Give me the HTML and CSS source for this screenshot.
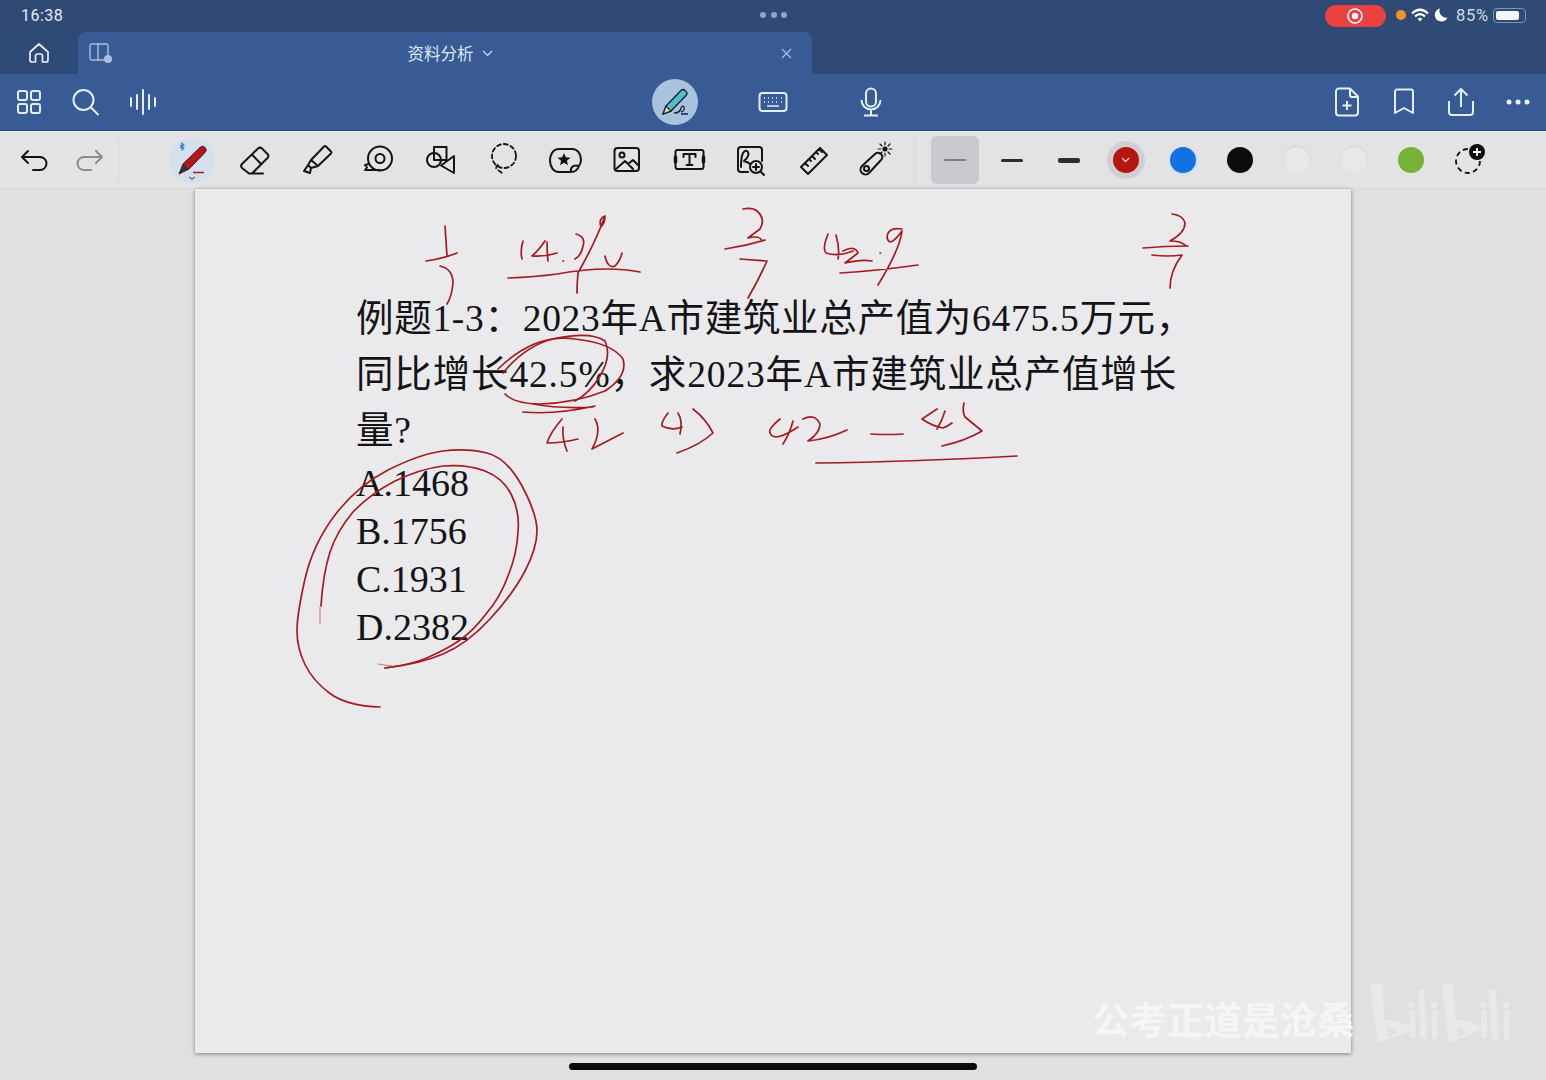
FILE: index.html
```html
<!DOCTYPE html>
<html lang="zh-CN">
<head>
<meta charset="utf-8">
<title>资料分析</title>
<link rel="stylesheet" href="styles.css">
</head>
<body>
<div class="app">
  <header class="chrome">
    <div class="status">
      <span class="time">16:38</span>
      <span class="dots"><i></i><i></i><i></i></span>
      <div class="status-right">
        <span class="rec"><svg width="18" height="18" viewBox="0 0 18 18"><circle cx="9" cy="9" r="7" fill="none" stroke="#fff" stroke-width="1.6"/><circle cx="9" cy="9" r="3.2" fill="#fff"/></svg></span>
        <span class="orange"></span>
        <svg class="st-ico" width="20" height="16" viewBox="0 0 20 16"><path d="M2 6.500Q10 -1 18 6.500M5 9.500Q10 4.500 15 9.500" fill="none" stroke="#fff" stroke-width="2.2"/><path d="M7.600 11.800Q10 9.600 12.400 11.800L10 14.400Z" fill="#fff"/></svg>
        <svg class="st-ico" width="16" height="16" viewBox="0 0 16 16"><path d="M7 1.500A6.600 6.600 0 1 0 14.500 10.500 6.600 6.600 0 0 1 7 1.500Z" fill="#fff"/></svg>
        <span class="pct">85%</span>
        <span class="battery"><b></b></span>
      </div>
    </div>
    <div class="tabs">
      <div class="home-tab">
        <svg width="24" height="24" viewBox="0 0 24 24" fill="none" stroke="#e6edf7" stroke-width="1.7" stroke-linejoin="round"><path d="M3 11 12 3l9 8v8a2 2 0 0 1-2 2h-3.500v-6a2 2 0 0 0-2-2h-3a2 2 0 0 0-2 2v6H5a2 2 0 0 1-2-2z"/></svg>
      </div>
      <div class="doc-tab">
        <svg class="tab-ico" width="24" height="22" viewBox="0 0 24 22" fill="none" stroke="#a9bedc" stroke-width="1.4"><rect x="1" y="2" width="18" height="16" rx="2"/><path d="M9 2v16"/><circle cx="19" cy="17" r="4" fill="#a9bedc" stroke="none"/></svg>
        <div class="doc-title"><span>资料分析</span><svg width="11" height="7" viewBox="0 0 11 7" fill="none" stroke="#d5e0f0" stroke-width="1.2"><path d="M1 1l4.500 4.500L10 1"/></svg></div>
        <svg class="tab-close" width="11" height="11" viewBox="0 0 11 11" stroke="#a9bedc" stroke-width="1.3"><path d="M1 1l9 9M10 1l-9 9"/></svg>
      </div>
    </div>
    <div class="bar">
      <div class="bar-left">
        <span class="bar-cell"><svg width="26" height="26" viewBox="0 0 26 26" fill="none" stroke="#e6edf7" stroke-width="2"><rect x="2" y="2" width="9" height="9" rx="2"/><rect x="15" y="2" width="9" height="9" rx="2"/><rect x="2" y="15" width="9" height="9" rx="2"/><rect x="15" y="15" width="9" height="9" rx="2"/></svg></span>
        <span class="bar-cell"><svg width="28" height="28" viewBox="0 0 28 28" fill="none" stroke="#e6edf7" stroke-width="2"><circle cx="11.500" cy="12" r="10"/><path d="M19 19.500 26.500 27"/></svg></span>
        <span class="bar-cell"><svg width="28" height="28" viewBox="0 0 28 28" fill="none" stroke="#e6edf7" stroke-width="2" stroke-linecap="round"><path d="M2 10v8M8 7v14M14 2v24M20 7v14M26 10v8"/></svg></span>
      </div>
      <div class="bar-center">
        <span class="center-cell"><span class="pen-btn"><svg width="30" height="30" viewBox="0 0 30 30"><path d="M3 27 6 19 21 3.500a2.500 2.500 0 0 1 4 0l1 1a2.500 2.500 0 0 1 0 4L11 24Z" fill="#55bccb" stroke="#17222e" stroke-width="1.400" stroke-linejoin="round"/><path d="M3 27 6 19 11 24Z" fill="#e7d3a4" stroke="#17222e" stroke-width="1.200"/><path d="M14 26Q20 26 21 21 22 18 24 20 25 24 21 25M21 27h7" fill="none" stroke="#17222e" stroke-width="1.300"/></svg></span></span>
        <span class="center-cell"><svg width="30" height="22" viewBox="0 0 30 22" fill="none" stroke="#e6edf7" stroke-width="2"><rect x="1.500" y="2" width="27" height="18" rx="3"/><path d="M6 7h1M10 7h1M14 7h1M18 7h1M23 7h1M6 11h1M10 11h1M14 11h1M18 11h1M23 11h1M9 15h12" stroke-width="1.500"/></svg></span>
        <span class="center-cell"><svg width="24" height="30" viewBox="0 0 24 30" fill="none" stroke="#e6edf7" stroke-width="2"><rect x="7" y="1.500" width="10" height="18" rx="5"/><path d="M2.500 13a9.500 9.500 0 0 0 19 0M12 23v5M5 28.500h14"/></svg></span>
      </div>
      <div class="bar-right">
        <span class="bar-cell"><svg width="26" height="30" viewBox="0 0 26 30" fill="none" stroke="#e6edf7" stroke-width="2" stroke-linejoin="round"><path d="M16 1.500H5a3 3 0 0 0-3 3v21a3 3 0 0 0 3 3h16a3 3 0 0 0 3-3V9.500Zm0 0V8a2 2 0 0 0 2 2h6M13 14v9M8.500 18.500h9"/></svg></span>
        <span class="bar-cell"><svg width="22" height="28" viewBox="0 0 22 28" fill="none" stroke="#e6edf7" stroke-width="2" stroke-linejoin="round"><path d="M2 3.500a2 2 0 0 1 2-2h14a2 2 0 0 1 2 2V25l-9-5-9 5Z"/></svg></span>
        <span class="bar-cell"><svg width="28" height="30" viewBox="0 0 28 30" fill="none" stroke="#e6edf7" stroke-width="2" stroke-linejoin="round"><path d="M14 20V2M7.500 8.500 14 2l6.500 6.500M2 14v11a3 3 0 0 0 3 3h18a3 3 0 0 0 3-3V14"/></svg></span>
        <span class="bar-cell"><svg width="24" height="6" viewBox="0 0 24 6" fill="#eef3fa"><circle cx="3" cy="3" r="2.500"/><circle cx="12" cy="3" r="2.500"/><circle cx="21" cy="3" r="2.500"/></svg></span>
      </div>
    </div>
  </header>

  <nav class="tools">
    <div class="history">
      <span class="hist-cell"><svg class="ico" width="40" height="40" viewBox="0 0 40 40"><path d="M14 11 8 17l6 6M8 17h18a6.500 6.500 0 0 1 0 13h-7"/></svg></span>
      <span class="hist-cell muted"><svg class="ico" width="40" height="40" viewBox="0 0 40 40"><path d="M26 11l6 6-6 6M32 17H14a6.500 6.500 0 0 0 0 13h7"/></svg></span>
    </div>
    <div class="tool-list">
      <span class="tool"><span class="pen-active"><svg width="46" height="46" viewBox="0 0 46 46"><path d="M10 37 14 27 31 10.500a3.500 3.500 0 0 1 5 0 3.500 3.500 0 0 1 0 5L20 32Z" fill="#b5161c" stroke="#4c1114" stroke-width="1"/><path d="M10 37 14 27 20 32Z" fill="#333"/><path d="M24 35.500h11" stroke="#b5161c" stroke-width="1.500"/><path d="M11 8l4 3-2 2V6l2 2-4 3" fill="none" stroke="#2a84d0" stroke-width="1.100"/><path d="M20 40l3 2 3-2" fill="none" stroke="#2a6fb0" stroke-width="1.100"/></svg></span></span>
      <span class="tool"><svg class="ico" width="40" height="40" viewBox="0 0 40 40"><path d="M8 24 24 8.500a3 3 0 0 1 4 0l5.500 5.500a3 3 0 0 1 0 4L18 33.500h-3L8 28a3 3 0 0 1 0-4ZM18 14.500 27 24M15 33.500h14"/></svg></span>
      <span class="tool"><svg class="ico" width="40" height="40" viewBox="0 0 40 40"><path d="M15 20 28 6.500a1.500 1.500 0 0 1 2 0l5 5a1.500 1.500 0 0 1 0 2L22 26ZM15 20l-3 5 3 3 7-2M12 25l-4 6 6 2 1-5"/></svg></span>
      <span class="tool"><svg class="ico" width="40" height="40" viewBox="0 0 40 40"><circle cx="22" cy="18.500" r="12"/><circle cx="22" cy="18.500" r="4.500"/><path d="M11 24 7 25l2 2.500-2 2.500h15"/></svg></span>
      <span class="tool"><svg class="ico" width="40" height="40" viewBox="0 0 40 40"><rect x="14" y="7" width="12.500" height="13"/><circle cx="14" cy="20" r="7"/><path d="M34 16v17l-13-7.500Z"/></svg></span>
      <span class="tool"><svg class="ico dashed" width="40" height="40" viewBox="-1 0 40 40"><circle cx="21" cy="16" r="12"/><path d="M15 25q-4 3 0 5l4 3"/></svg></span>
      <span class="tool"><svg class="ico" width="40" height="40" viewBox="-1 0 40 40"><path d="M26 32H14C8 32 5 26 5 20.500S8 9 14 9h13c6 0 9 5.500 9 11 0 2-1 4.500-2 6M26 32c-1-4 2-8 8-6-1 3-4 6-8 6Z"/><path d="M19 13l1.800 4.300 4.700.4-3.600 3 1.100 4.500-4-2.400-4 2.400 1.100-4.500-3.600-3 4.700-.4Z" fill="#111" stroke="none"/></svg></span>
      <span class="tool"><svg class="ico" width="40" height="40" viewBox="-1 0 40 40"><rect x="7.500" y="8" width="24.500" height="23" rx="3"/><circle cx="15" cy="15" r="2.500"/><path d="M9 29l9-8 8 8M21 24l5-4 6 6"/></svg></span>
      <span class="tool"><svg class="ico" width="40" height="40" viewBox="-1.500 0 40 40"><rect x="6" y="10" width="28" height="19" rx="2"/><path d="M14 14h12v3M14 14v3M20 14v11M17 25h6"/><path d="M6 17v5M34 17v5" stroke-width="3.500"/></svg></span>
      <span class="tool"><svg class="ico" width="40" height="40" viewBox="0 0 40 40"><path d="M18 32h-7a3 3 0 0 1-3-3V10a3 3 0 0 1 3-3h18a3 3 0 0 1 3 3v11M11 27q0-10 2-14 3-4 5-1 2 4-4 9 4 1 6 3"/><circle cx="26" cy="27" r="6"/><path d="M31 32l3 3M26 24v6M23 27h6"/></svg></span>
      <span class="tool"><svg class="ico" width="40" height="40" viewBox="-2 0 40 40"><path d="M7 27 26 8l7 7L14 34ZM11 23l3 3M15 19l2 2M18 16l3 3M22 12l2 2M25 9l3 3"/></svg></span>
      <span class="tool"><svg class="ico" width="40" height="40" viewBox="0 0 40 40"><path d="M8 26 21 14a4 4 0 0 1 6 0 4 4 0 0 1 0 6L15 33a4.500 4.500 0 0 1-7-7Z"/><circle cx="12.500" cy="28.500" r="2.500"/><circle cx="31" cy="9" r="2.500" fill="#111" stroke="none"/><path class="thin" d="M31 2v3M31 13v3M24 9h3M35 9h3M26 4l2 2M34 12l2 2M36 4l-2 2M28 12l-2 2"/></svg></span>
    </div>
    <div class="pen-opts">
      <span class="opt selected"><i class="line thin-line"></i></span>
      <span class="opt"><i class="line mid-line"></i></span>
      <span class="opt"><i class="line bold-line"></i></span>
      <span class="opt"><span class="swatch red"><svg width="9" height="6" viewBox="0 0 9 6" fill="none" stroke="#f4d4d4" stroke-width="1.300"><path d="M1 1l3.500 3.500L8 1"/></svg></span></span>
      <span class="opt"><span class="swatch blue"></span></span>
      <span class="opt"><span class="swatch black"></span></span>
      <span class="opt"><span class="swatch white"></span></span>
      <span class="opt"><span class="swatch white"></span></span>
      <span class="opt"><span class="swatch green"></span></span>
      <span class="opt"><svg width="36" height="36" viewBox="0 0 36 36"><circle cx="18" cy="19" r="12" fill="none" stroke="#111" stroke-width="1.800" stroke-dasharray="5 3.500"/><circle cx="27" cy="10" r="8" fill="#0c0c0c"/><path d="M27 6v8M23 10h8" stroke="#fff" stroke-width="1.800"/></svg></span>
    </div>
  </nav>

  <main class="stage">
    <article class="paper">
      <div class="problem">
        <p>例题1-3：2023年A市建筑业总产值为6475.5万元，</p>
        <p class="wide">同比增长42.5%，求2023年A市建筑业总产值增长</p>
        <p>量?</p>
      </div>
      <ul class="options">
        <li>A.1468</li>
        <li>B.1756</li>
        <li>C.1931</li>
        <li>D.2382</li>
      </ul>
      <svg class="ink" width="1156" height="865" viewBox="195 188 1156 865">
        <path d="M445 225Q446 240 447 255M426 260Q442 258 457 252M440 265Q453 268 453 282 452 295 447 303"/>
        <path d="M523 240Q520 250 522 258M545 240Q538 250 532 255 545 256 557 252M547 241Q547 250 548 260M563 260h.6M576 233Q586 236 583 245 581 255 575 258"/>
        <path d="M605 215Q598 218 601 226 605 222 605 215 596 240 578 272 577 282 577 292M605 255Q608 268 615 265 620 260 622 252M508 277Q535 276 557 273 585 268 607 268 625 268 640 271"/>
        <path d="M743 208Q752 206 757 210 766 218 760 228L748 237Q760 234 762 240M725 248Q745 245 765 239M740 258 767 260Q758 280 748 297"/>
        <path d="M503 372Q525 345 553 338 590 330 605 340 612 355 600 375 590 392 575 400"/>
        <path d="M498 368Q535 332 575 338 612 342 623 358 628 375 605 390 575 402 540 403 515 403 505 393"/>
        <path d="M523 411Q555 414 595 405M533 403Q560 408 593 406"/>
        <path d="M562 418Q550 432 547 442 562 442 578 438M563 426Q562 438 567 450M595 418Q602 430 592 448L623 432"/>
        <path d="M668 412Q661 421 662 425 672 430 682 426M678 412Q683 420 680 433M693 408Q706 418 713 432 700 444 677 452"/>
        <path d="M828 233Q822 248 826 252 838 256 853 250M836 234Q840 248 838 258M843 250Q855 244 858 252L845 262Q862 258 872 260M880 252h.6M902 228Q888 226 887 236 889 248 902 230 900 248 878 284M840 272Q875 270 918 264"/>
        <path d="M1172 213Q1183 214 1185 222 1185 232 1170 240 1182 240 1186 245M1143 247Q1165 245 1188 245M1152 254Q1168 256 1182 254 1170 270 1170 287"/>
        <path d="M780 418Q768 428 770 432 774 442 798 426M793 420Q790 432 783 443M803 418Q815 412 820 423 820 432 808 440 828 438 847 429"/>
        <path d="M871 433Q887 434 903 433"/>
        <path d="M937 408 922 418Q932 425 943 427 948 425 952 422M945 410Q942 420 937 428M964 402Q962 410 965 416L982 430Q965 440 942 445"/>
        <path d="M816 462Q907 461 1017 455"/>
        <path d="M380 706Q347 705 330 692.500Q313 680 305 663.500Q297 647 297 630Q297 613 305 578Q313 543 335 514Q357 485 388 469Q420 453 443 450Q467 447 487 452Q507 457 522 485Q537 513 537 530Q537 547 525 570Q513 593 490 618Q467 643 443 653Q420 663 385 667"/>
        <path d="M321 605Q323 573 330 551Q337 530 353 511Q370 493 395 480Q420 468 443 465Q467 463 485 470Q503 477 511 493Q520 510 518 531Q517 553 508 575Q500 597 486 613Q473 630 460 639Q447 648 431 655Q415 663 385 667"/>
        <path class="ink-faint" d="M378 663 392 665M320 606V622"/>
      </svg>
    </article>
    <div class="home-indicator"></div>
  </main>

  <div class="watermark">公考正道是沧桑</div>
  <svg class="bili" width="142" height="66" viewBox="1370 980 142 66"><path fill-rule="evenodd" d="M1370 985 1382 983 1385 1020Q1400 1018 1412 1030L1378 1043ZM1387 1027 1388 1037 1398 1032Z"/><path fill-rule="evenodd" d="M1442 985 1453 983 1456 1020Q1472 1018 1482 1030L1449 1043ZM1457 1027 1458 1037 1468 1032Z"/><path d="M1408 1002h6v6h-6ZM1409 1010h6l1 28h-6ZM1418 990l6-1 3 49h-6ZM1431 1002h6v6h-6ZM1432 1010h6v29h-6ZM1480 1002h6v6h-6ZM1481 1010h6v28h-6ZM1489 990l7-1 2 50h-6ZM1503 1002h6v6h-6ZM1504 1010h6v30h-6Z"/></svg>
</div>
</body>
</html>
```

FILE: styles.css
```css
* { box-sizing: border-box; }
html, body { margin: 0; padding: 0; }
body { width: 1546px; height: 1080px; overflow: hidden; background: #e0dfe2; font-family: "Liberation Sans", "Noto Sans CJK SC", sans-serif; }
.app { position: relative; width: 1546px; height: 1080px; display: flex; flex-direction: column; }

.chrome { background: #2f4a75; color: #e6edf7; }
.status { height: 32px; display: grid; grid-template-columns: 1fr auto 1fr; align-items: center; padding: 0 20px 2px 21px; }
.time { font: 16px Roboto, sans-serif; letter-spacing: .5px; color: #e4eaf3; }
.dots { display: flex; gap: 4.500px; }
.dots i { width: 6px; height: 6px; border-radius: 50%; background: #8ba6d2; }
.status-right { display: flex; align-items: center; justify-content: flex-end; }
.rec { width: 61px; height: 22px; border-radius: 11px; background: #e8413f; display: flex; align-items: center; justify-content: center; margin-top: 1px; margin-right: 10px; }
.orange { width: 10px; height: 10px; border-radius: 50%; background: #e9962a; margin-right: 4px; }
.st-ico { margin-right: 3px; }
.pct { font: 16.500px Roboto, sans-serif; color: #cfdaea; letter-spacing: .8px; margin: 0 4px 0 4px; }
.battery { width: 33px; height: 15px; border: 1px solid #7f93b4; border-radius: 4px; padding: 2px; display: flex; }
.battery b { width: 23px; background: #f4f5f7; border-radius: 2px; }

.tabs { height: 42px; display: flex; }
.home-tab { width: 78px; background: #2d4a76; display: flex; align-items: center; justify-content: center; }
.doc-tab { width: 734px; background: #385b95; border-radius: 8px 8px 0 0; display: grid; grid-template-columns: 1fr auto 1fr; align-items: center; padding: 0 11px; }
.doc-title { display: flex; align-items: center; gap: 8px; margin-left: 10px; font: 16.500px "Noto Sans CJK SC", sans-serif; color: #dde6f3; }
.tab-close { justify-self: end; margin-right: 9px; }

.bar { height: 57px; background: #385b95; border-bottom: 1px solid #21426f; display: grid; grid-template-columns: 1fr auto 1fr; align-items: center; }
.bar-left, .bar-right, .bar-center { display: flex; align-items: center; }
.bar-right { justify-content: flex-end; }
.bar-cell { width: 57px; display: flex; justify-content: center; align-items: center; }
.center-cell { width: 98px; display: flex; justify-content: center; align-items: center; }
.pen-btn { width: 46px; height: 46px; border-radius: 50%; background: #a9c3de; display: flex; align-items: center; justify-content: center; }

.tools { height: 58px; background: #e3e2e5; border-top: 1px solid #eef3fa; border-bottom: 1px solid #d9d8db; display: flex; align-items: center; }
.ico { fill: none; stroke: #141414; stroke-width: 2; stroke-linejoin: round; stroke-linecap: round; }
.ico.dashed { stroke-dasharray: 4 3; stroke-width: 1.800; }
.ico .thin { stroke-width: 1.200; }
.history { display: flex; padding-left: 6px; width: 120px; height: 46px; align-items: center; border-right: 1px solid #d8d7da; }
.hist-cell { width: 56px; display: flex; justify-content: center; }
.hist-cell.muted .ico { stroke: #8c8c8e; }
.tool-list { display: flex; margin-left: 42px; }
.tool { width: 62px; height: 48px; display: flex; align-items: center; justify-content: center; }
.pen-active { width: 46px; height: 46px; border-radius: 50%; background: #d4e1ec; display: flex; }
.pen-opts { display: flex; margin-left: 10px; padding-left: 10px; border-left: 1px solid #d8d7da; height: 48px; width: 640px; }
.opt { width: 57px; height: 48px; display: flex; align-items: center; justify-content: center; position: relative; }
.opt.selected { width: 48px; margin: 0 4.500px; background: #c9c8cc; border-radius: 6px; }
.line { display: block; width: 22px; border-radius: 2px; }
.thin-line { height: 2px; background: #7b7b7e; }
.mid-line { height: 3px; background: #2d2d2f; }
.bold-line { height: 5px; background: #2d2d2f; }
.swatch { width: 26px; height: 26px; border-radius: 50%; display: flex; align-items: center; justify-content: center; }
.red { background: #b81412; box-shadow: 0 0 0 6px #d0cfd2; }
.blue { background: #1272e2; box-shadow: 1px 1px 2px #bcdcf8; }
.black { background: #0c0c0f; }
.white { background: #e8e7ea; box-shadow: 0 -1px 2px #d2d1d4; }
.green { background: #75b336; }

.stage { flex: 1; display: flex; flex-direction: column; align-items: center; }
.paper { position: relative; width: 1156px; height: 864px; background: #eae9ec; box-shadow: 0 1px 4px rgba(0,0,0,.45); padding: 102px 0 0 161px; font-family: "Liberation Serif", "Noto Sans CJK SC", serif; color: #141416; font-size: 37.500px; }
.problem p { margin: 0; height: 56px; line-height: 56px; white-space: nowrap; letter-spacing: .7px; }
.problem p.wide { letter-spacing: .85px; }
.options { list-style: none; margin: 0; padding: 0; font-size: 38px; }
.options li { height: 48px; line-height: 48px; }
.ink { position: absolute; left: 0; top: 0; fill: none; stroke: #a51c20; stroke-width: 1.700; stroke-linecap: round; stroke-linejoin: round; filter: blur(.25px); }
.ink-faint { stroke: #c9797b; stroke-width: 1; }
.home-indicator { width: 408px; height: 7px; margin-top: 10px; border-radius: 4px; background: #0a0a0a; }

.watermark { position: absolute; left: 1092px; top: 996px; font: 700 37.500px/44px "Noto Sans CJK SC", sans-serif; color: rgba(247,247,249,.9); white-space: nowrap; }
.bili { position: absolute; left: 1370px; top: 980px; fill: #e9e8eb; }
```
